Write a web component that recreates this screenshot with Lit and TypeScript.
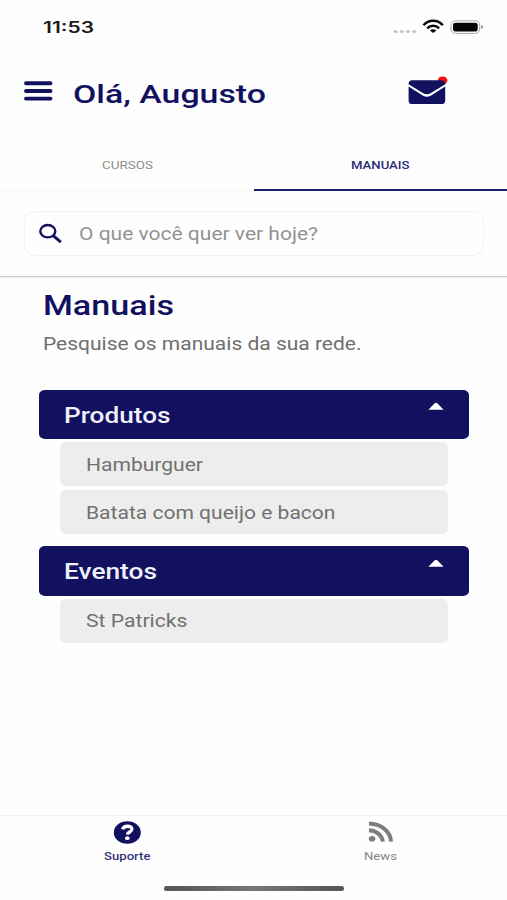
import { LitElement, html, css, svg } from "lit";
import { customElement, property, query } from "lit/decorators.js";

/** One line of text stretched horizontally to a given width. */
@customElement("wide-text")
class WideText extends LitElement {
  static styles = css`
    :host { display: block; flex: none; white-space: nowrap; }
    .line { display: inline-block; transform-origin: 0 50%; vertical-align: top; }
  `;
  @property({ type: String }) text = "";
  @property({ type: Number }) size = 0;
  @query(".line") line!: HTMLElement;

  render() {
    return html`<span class="line">${this.text}</span>`;
  }
  updated() {
    this.style.width = this.size + "px";
    const natural = this.line.offsetWidth ? parseFloat(getComputedStyle(this.line).width) : 0;
    if (natural) this.line.style.transform = `scaleX(${this.size / natural})`;
  }
}

const wide = (text: string, size: number) =>
  html`<wide-text .text=${text} .size=${size}></wide-text>`;

interface Section { title: string; titleWidth: number; items: [string, number][]; }

const sections: Section[] = [
  { title: "Produtos", titleWidth: 106.5, items: [["Hamburguer", 117], ["Batata com queijo e bacon", 249.5]] },
  { title: "Eventos", titleWidth: 93, items: [["St Patricks", 101.5]] },
];

@customElement("app-root")
class AppRoot extends LitElement {
  static styles = css`
    :host {
      display: flex; flex-direction: column; box-sizing: border-box;
      width: 507px; height: 900px; overflow: hidden;
      background: #fefefe; color: #111160;
      font-family: Roboto, "Liberation Sans", sans-serif;
    }
    svg { display: block; flex: none; }
    .status { display: flex; align-items: center; height: 55px; padding-left: 43px; flex: none; }
    .time { font: 600 15.6px/20px Inter, "Liberation Sans", sans-serif; color: #1a1a1a; margin-top: 1px; }
    .status svg { margin-left: 298.5px; margin-top: -1px; }
    .header { display: flex; align-items: center; height: 79px; flex: none; padding-left: 24px; }
    .menu { margin-top: -7px; }
    .hello { font: 500 26.5px/32px Roboto, sans-serif; margin: -1px 0 0 20px; }
    .mail { margin: -7px 0 0 141.5px; }
    .tabs { display: grid; grid-template-columns: 254px 253px; height: 57px; flex: none; }
    .tab {
      display: flex; align-items: center; justify-content: center; box-sizing: border-box;
      padding-top: 8px; font: 400 11.3px/14px Roboto, sans-serif; color: #8d8d8d;
      border-bottom: 1px solid #f6f6f8;
    }
    .tab.active { color: #2b2b76; font-weight: 500; border-bottom: 2.5px solid #1d1d68; padding-top: 9px; }
    .search-area { box-sizing: border-box; height: 86px; padding: 20px 23px 0 24px; border-bottom: 1px solid #cfcfcf; box-shadow: 0 1px 1px #ececec; flex: none; }
    .search {
      display: flex; align-items: center; height: 45px; box-sizing: border-box;
      border: 1.5px solid #f2f2f2; border-radius: 12px / 10px; padding-left: 13px;
      font-size: 18px; line-height: 22px; color: #929292;
    }
    .search wide-text { margin-left: 16px; }
    .content { flex: 1; display: flex; flex-direction: column; }
    .title { font: 500 26.8px/32px Roboto, sans-serif; margin: 13px 0 0 43px; }
    .sub { font: 400 17.8px/22px Roboto, sans-serif; color: #6e6e6e; margin: 11px 0 0 43.2px; }
    .list { display: flex; flex-direction: column; gap: 12px; margin: 34.5px 38px 0 38.5px; }
    .bar {
      display: flex; justify-content: space-between; height: 49.5px; box-sizing: border-box;
      padding: 12.5px 25px 0 25.3px; background: #111160; border-radius: 6px / 5px;
      font: 500 21.3px/26px Roboto, sans-serif; color: #f0f0fa;
    }
    .bar wide-text { margin-top: .5px; }
    .item {
      display: flex; align-items: center; height: 44px; box-sizing: border-box;
      margin: 4px 21.5px 0; padding: 1px 0 0 25.5px; background: #ededed; border-radius: 6px / 5px;
      font-size: 17.6px; line-height: 22px; color: #717171;
    }
    .bar + .item { margin-top: 3px; }
    .nav { display: grid; grid-template-columns: 254px 253px; height: 85px; box-sizing: border-box; border-top: 1.5px solid #f1f1f1; flex: none; position: relative; }
    .dest { display: flex; flex-direction: column; align-items: center; padding-top: 5px; font: 500 11.3px/14px Roboto, sans-serif; color: #35357c; }
    .dest wide-text { margin-top: 6px; }
    .dest.idle { color: #858585; font-weight: 400; }
    .home { position: absolute; left: 164px; top: 70px; width: 180px; height: 5px; border-radius: 3px; background: linear-gradient(90deg, #555, #777 50%, #555); }
  `;

  render() {
    return html`
      <div class="status">
        <div class="time">${wide("11:53", 51)}</div>
        <svg width="94" height="18" viewBox="0 0 94 18">
          <g fill="#c4c4c4">${[2.5, 8.7, 14.9, 21.1].map((x) => svg`<ellipse cx=${x} cy="13.500" rx="2.1" ry="1.6" />`)}</g>
          <g fill="none" stroke="#0a0a0a" stroke-width="2.500">
            <path d="M30.500 7.200C35.500 1.400 44.800 1.400 49.800 7.200" />
            <path d="M34.200 10.400C37.500 6.900 42.800 6.900 46.100 10.400" />
          </g>
          <path d="M37 12.400C38.900 10.700 41.400 10.700 43.300 12.400L40.150 15Z" fill="#0a0a0a" />
          <rect x="58" y="2.800" width="28.700" height="12.600" rx="4.500" fill="none" stroke="#aaa" />
          <rect x="60" y="4.700" width="24.700" height="8.800" rx="2.500" fill="#050505" />
          <path d="M88.200 7.100C90.800 7.500 90.800 10.700 88.200 11.100Z" fill="#999" />
        </svg>
      </div>
      <div class="header">
        <svg class="menu" width="29" height="22" viewBox="0 0 29 22">
          <path d="M2 3.200H26.500M2 11H26.500M2 18.600H26.500" stroke="#111160" stroke-width="3.900" stroke-linecap="round" />
        </svg>
        <div class="hello">${wide("Olá, Augusto", 193)}</div>
        <svg class="mail" width="40" height="30" viewBox="0 0 40 30">
          <ellipse cx="34.600" cy="4.400" rx="4.800" ry="4" fill="#f30d14" />
          <path d="M4 4.200H33Q37.200 4.500 37.200 8V8.600L22.700 17.300Q18.900 19.400 15.100 17.300L.6 8.600V8Q.6 4.500 4 4.200Z" fill="#111160" />
          <path d="M.2 9.300L15.200 18.600Q18.900 20.700 22.600 18.600L37.700 9.300" fill="none" stroke="#fefefe" stroke-width="1.900" />
          <path d="M.6 10.500L15.100 19.700Q18.900 21.700 22.700 19.700L37.200 10.500V24.700Q37 28 33.500 28.100H4.200Q.8 28 .6 24.700Z" fill="#111160" />
        </svg>
      </div>
      <div class="tabs">
        <div class="tab">${wide("CURSOS", 51)}</div>
        <div class="tab active">${wide("MANUAIS", 58.5)}</div>
      </div>
      <div class="search-area">
        <div class="search">
          <svg width="25" height="22" viewBox="0 0 25 22">
            <ellipse cx="9.800" cy="8.200" rx="7.500" ry="6.200" fill="none" stroke="#111160" stroke-width="2.400" />
            <path d="M15.200 12.700L22.800 19.200" stroke="#111160" stroke-width="2.900" />
          </svg>
          ${wide("O que você quer ver hoje?", 239)}
        </div>
      </div>
      <div class="content">
        <div class="title">${wide("Manuais", 131)}</div>
        <div class="sub">${wide("Pesquise os manuais da sua rede.", 318.5)}</div>
        <div class="list">
          ${sections.map((s) => html`
            <div class="section">
              <div class="bar">
                ${wide(s.title, s.titleWidth)}
                <svg width="16" height="9" viewBox="0 0 16 9">
                  <path d="M.4 7.800L6.700 1.200Q8 .1 9.300 1.200L15.600 7.800Z" fill="#fff" />
                </svg>
              </div>
              ${s.items.map(([label, size]) => html`<div class="item">${wide(label, size)}</div>`)}
            </div>`)}
        </div>
      </div>
      <div class="nav">
        <div class="dest">
          <svg width="28" height="23" viewBox="0 0 28 23">
            <ellipse cx="14.300" cy="11.500" rx="13.500" ry="11.200" fill="#111160" />
            <path d="M9.600 8.400C10.800 4.200 18.900 4.200 18.900 8.300C18.900 11.100 14.600 10.800 14.400 13.600" fill="none" stroke="#fff" stroke-width="3.300" />
            <ellipse cx="14.300" cy="17.200" rx="2.300" ry="1.900" fill="#fff" />
          </svg>
          ${wide("Suporte", 46.5)}
        </div>
        <div class="dest idle">
          <svg width="26" height="23" viewBox="0 0 26 23">
            <g fill="none" stroke="#7d7d7d" stroke-width="4">
              <path d="M.9 2.600C13 2.900 22.600 10.400 23 20.600" />
              <path d="M.9 9.300C8 9.600 14.300 14 14.700 20.600" />
            </g>
            <ellipse cx="4.100" cy="17.800" rx="3.300" ry="2.800" fill="#7d7d7d" />
          </svg>
          ${wide("News", 33)}
        </div>
        <div class="home"></div>
      </div>
    `;
  }
}
